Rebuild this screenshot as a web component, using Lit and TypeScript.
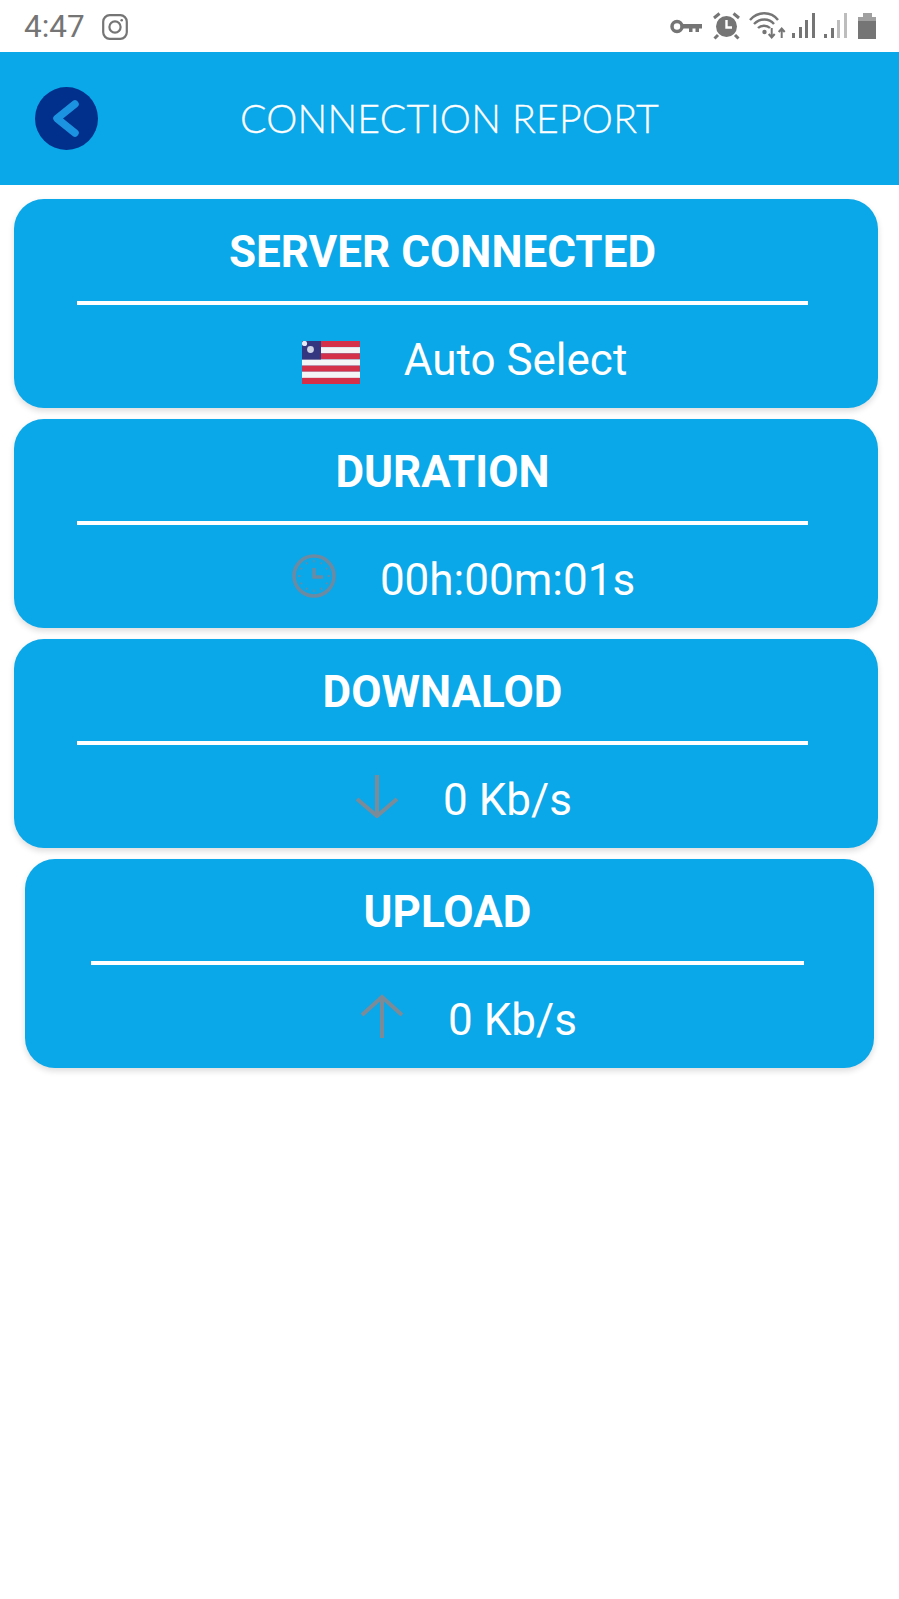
import { LitElement, html, css, svg } from "lit";
import { customElement } from "lit/decorators.js";

const G = "#757575";

@customElement("app-root")
export class AppRoot extends LitElement {
  static styles = css`
    :host { display: block; width: 899px; height: 1599px; background: #fff; font-family: Roboto, "Liberation Sans", sans-serif; overflow: hidden; }
    .status { height: 52px; display: flex; align-items: center; color: #757575; box-sizing: border-box; padding: 2px 0 0 24px; }
    .time { font-size: 31.5px; line-height: 50px; }
    .ig { margin-left: 17px; display: block; }
    .sys { margin-left: auto; margin-right: 19px; margin-top: -2px; display: block; }
    .bar { height: 133px; background: #0aa7e9; display: flex; align-items: center; box-sizing: border-box; padding-left: 35px; }
    .back { display: block; flex: none; }
    .title { font-family: Lato, sans-serif; font-weight: 300; font-size: 39.3px; color: #fff; margin-left: 142px; margin-bottom: 2px; letter-spacing: 0.2px; white-space: nowrap; line-height: 44px; -webkit-text-stroke: 0.3px #fff; }
    .cards { display: flex; flex-direction: column; gap: 11px; padding: 14px 21px 0 14px; }
    .card { height: 209px; background: #0aa7e9; border-radius: 30px; box-shadow: 0 3px 6px rgba(0,0,0,.14); display: flex; flex-direction: column; align-items: center; box-sizing: border-box; padding: 0 70px 0 63px; }
    .card.last { margin: 0 4px 0 11px; padding: 0 70px 0 66px; }
    .head { height: 99px; padding-top: 3px; width: 100%; display: flex; align-items: center; justify-content: center; color: #fff; font-weight: 700; font-size: 44px; border-bottom: 4px solid #fff; box-sizing: content-box; white-space: nowrap; line-height: 1; }
    .val { flex: 1; display: flex; align-items: center; justify-content: center; gap: 44px; color: #fff; font-size: 44px; white-space: nowrap; width: 100%; box-sizing: border-box; padding: 6px 0 0 42px; }
    .val.wide { padding-left: 44px; }
    .val svg { display: block; flex: none; margin-top: -7px; }
    .val svg.flag { margin-top: 6px; }
  `;

  private card(title: string, icon: unknown, value: string, wide = false, last = false) {
    return html`<section class="card ${last ? "last" : ""}">
      <div class="head">${title}</div>
      <div class="val ${wide ? "wide" : ""}">${icon}<span>${value}</span></div>
    </section>`;
  }

  render() {
    const flag = html`<svg class="flag" width="58" height="43" viewBox="0 0 58 43">
      ${[0,1,2,3,4,5,6].map(i => svg`<rect x="0" y="${(i*43)/7}" width="58" height="${43/7+0.1}" fill="${i%2 ? "#f4f4f6" : "#d5304a"}"/>`)}
      <rect x="0" y="0" width="19" height="18.500" fill="#34377f"/>
      <circle cx="2.500" cy="2.500" r="2.600" fill="#e6e8f2"/><circle cx="8.500" cy="8.500" r="3.400" fill="#cfd3e6"/>
    </svg>`;
    const clock = html`<svg width="44" height="44" viewBox="0 0 44 44" fill="none" stroke="#6c8ba3">
      <circle cx="22" cy="22" r="20" stroke-width="3.600"/>
      <path d="M22 14v9h9" stroke-width="3.400"/>
      <path d="M22 6v2.500M22 35.500v2.500M6 22h2.500M35.500 22h2.500M14 8.200l1.200 2M30 8.200l-1.200 2M8.200 14l2 1.200M8.200 30l2-1.200M35.800 14l-2 1.200M35.800 30l-2-1.200M14 35.800l1.200-2M30 35.800l-1.200-2" stroke-width="1.800" opacity=".8"/>
    </svg>`;
    const down = html`<svg width="44" height="44" viewBox="0 0 44 44" fill="none" stroke="#7b8c98" stroke-width="4">
      <path d="M22 1v41M2 25l20 17 20-17"/>
    </svg>`;
    const up = html`<svg width="44" height="44" viewBox="0 0 44 44" fill="none" stroke="#7b8c98" stroke-width="4">
      <path d="M22 44V3M2 21L22 3l20 18"/>
    </svg>`;
    return html`
      <div class="status">
        <span class="time">4:47</span>
        <svg class="ig" width="26" height="26" viewBox="0 0 26 26" fill="none" stroke="${G}" stroke-width="2.200">
          <rect x="1.200" y="1.200" width="23.600" height="23.600" rx="6.500"/>
          <circle cx="13" cy="13" r="5.600"/>
          <circle cx="19.700" cy="6.300" r="1.300" fill="${G}" stroke="none"/>
        </svg>
        <svg class="sys" width="212" height="30" viewBox="0 0 212 30" fill="none">
          <g stroke="${G}">
            <circle cx="9" cy="15.500" r="5" stroke-width="3.500"/>
            <path d="M14 13h20v4.500h-3v3.500h-3.500v-3.500h-3v3.500h-3.500v-3.500H14z" fill="${G}" stroke="none"/>
            <circle cx="58.500" cy="15.500" r="10.500" fill="${G}" stroke="none"/>
            <path d="M58.500 9v7.500h5.500" stroke="#fff" stroke-width="2.400"/>
            <path d="M46 7l5.500-4.500M71 7l-5.500-4.500M50 24l-3.500 3.500M67 24l3.500 3.500" stroke-width="3"/>
            <path d="M82 9C90 0 103 0 110 9M86 13C92 7 101 7 106 13M90 17c3-3 9-3 12 0" stroke-width="2.400"/>
            <path d="M103.700 17v9M100.700 23l3 3.500 3-3.500M113.700 27v-9M110.700 21l3-3.500 3 3.500" stroke-width="2"/>
          </g>
          <circle cx="96.500" cy="21" r="2.200" fill="${G}"/>
          <g fill="${G}">
            <rect x="124" y="22" width="3" height="5"/><rect x="131" y="16" width="3" height="11"/>
            <rect x="137" y="9" width="3" height="18"/><rect x="144" y="2" width="3" height="25"/>
            <rect x="156" y="23" width="3" height="4"/><rect x="163" y="17" width="3" height="10"/>
          </g>
          <g fill="#bdbdbd">
            <rect x="169" y="9" width="3" height="18"/><rect x="176" y="2" width="3" height="25"/>
          </g>
          <path d="M195 6V2h9v4z" fill="#a0a0a0"/>
          <rect x="190" y="6" width="18" height="4" fill="#a0a0a0"/>
          <rect x="190" y="10" width="18" height="18" fill="${G}"/>
        </svg>
      </div>
      <header class="bar">
        <svg class="back" width="63" height="63" viewBox="0 0 63 63" fill="none">
          <circle cx="31.500" cy="31.500" r="31.500" fill="#012f8c"/>
          <path d="M40 17L22 31.500 40 46" stroke="#1b93e0" stroke-width="7.500" stroke-linecap="round" stroke-linejoin="round"/>
        </svg>
        <div class="title">CONNECTION REPORT</div>
      </header>
      <main class="cards">
        ${this.card("SERVER CONNECTED", flag, "Auto Select", true)}
        ${this.card("DURATION", clock, "00h:00m:01s")}
        ${this.card("DOWNALOD", down, "0 Kb/s")}
        ${this.card("UPLOAD", up, "0 Kb/s", false, true)}
      </main>
    `;
  }
}
